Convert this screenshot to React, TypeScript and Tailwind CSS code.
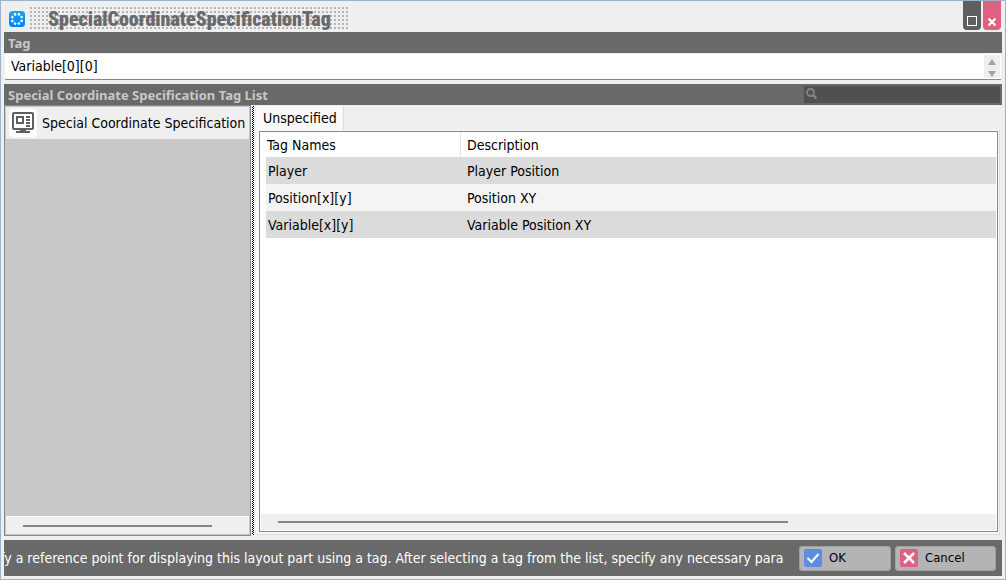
import type { ReactNode } from "react";

const rows = [
  { name: "Player", description: "Player Position" },
  { name: "Position[x][y]", description: "Position XY" },
  { name: "Variable[x][y]", description: "Variable Position XY" },
];

const dots = [0, 1, 2, 3, 4, 5, 6, 7];

function AppIcon() {
  return (
    <svg className="size-4 shrink-0" viewBox="0 0 16 16" aria-hidden="true">
      <defs>
        <linearGradient id="app-fill" x1="0" y1="0" x2="0" y2="1">
          <stop offset="0" stopColor="#1ba4ff" />
          <stop offset="1" stopColor="#0080ff" />
        </linearGradient>
      </defs>
      <rect width="16" height="16" rx="3.5" fill="url(#app-fill)" />
      {dots.map((n) => (
        <circle
          key={n}
          cx={8 + 5 * Math.cos((n * Math.PI) / 4 + 0.39)}
          cy={8 + 5 * Math.sin((n * Math.PI) / 4 + 0.39)}
          r="1.3"
          fill="#fff"
        />
      ))}
    </svg>
  );
}

function MonitorIcon() {
  return (
    <svg className="size-7 shrink-0 rounded bg-white" viewBox="0 0 28 28" aria-hidden="true">
      <rect x="4" y="4" width="20" height="16" rx="1" fill="none" stroke="#5f5f5f" strokeWidth="2" />
      <rect x="8" y="8" width="6" height="6" fill="none" stroke="#5f5f5f" strokeWidth="2" />
      <path d="M17 8h4M17 11h4M17 14h4M17 17h4" stroke="#5f5f5f" strokeWidth="2" />
      <path d="M11 21h6v1h4v2H7v-2h4z" fill="#5f5f5f" />
    </svg>
  );
}

function FooterButton({ label, wide, children }: { label: string; wide?: boolean; children: ReactNode }) {
  return (
    <button
      type="button"
      className={`flex h-[25px] items-center gap-[7px] rounded bg-[#b4b4b4] pl-[5px] font-['DejaVu_Sans_Condensed','DejaVu_Sans',sans-serif] text-[13px] text-black ring-1 ring-[#a0a0a0] ring-inset ${wide ? "w-[101px]" : "w-[92px]"}`}
    >
      {children}
      {label}
    </button>
  );
}

export default function App() {
  return (
    <div className="flex h-screen min-h-80 flex-col border border-[#99b4d1] bg-[#efefef] px-[3px] pb-[3px] font-['DejaVu_Sans_Condensed','DejaVu_Sans',sans-serif] text-[14px] leading-5 text-black">
      <header className="flex h-[31px] shrink-0 items-start justify-between">
        <div className="flex items-center gap-[5px] pt-1.5 pl-[5px]">
          <AppIcon />
          <div className="flex h-[23px] w-[320px] items-center bg-[conic-gradient(from_270deg_at_2px_2px,#b4b4b4_90deg,transparent_0)] bg-size-[4px_4px] pl-[18px]">
            <h1 className="font-['Liberation_Sans_Narrow','Roboto_Condensed','Roboto',sans-serif] text-[20px] leading-5 font-black text-[#6a6a6a]">
              SpecialCoordinateSpecificationTag
            </h1>
          </div>
        </div>
        <div className="flex gap-0.5 pr-px">
          <button type="button" aria-label="Maximize" className="flex h-[29px] w-[18px] items-end justify-center rounded-b bg-[#5f5f5f] pb-1">
            <span className="size-2.5 border border-white" />
          </button>
          <button type="button" aria-label="Close" className="flex h-[29px] w-[18px] items-end justify-center rounded-b bg-[#e06083] pb-1">
            <svg className="size-2" viewBox="0 0 8 8" aria-hidden="true">
              <path d="M0.500 0.500l7 7M7.500 0.500l-7 7" stroke="#fff" strokeWidth="2.200" />
            </svg>
          </button>
        </div>
      </header>

      <label htmlFor="tag" className="h-[21px] shrink-0 bg-[#696969] pl-1 font-['Noto_Sans',sans-serif] text-[13px] leading-[22px] font-bold text-[#c8c8c8]">
        Tag
      </label>
      <div className="mt-px mr-px ml-px flex h-[26px] shrink-0 border-b border-[#868686] bg-white">
        <input id="tag" defaultValue="Variable[0][0]" className="h-6 min-w-0 flex-1 pl-1.5 outline-none" />
        <div className="mt-px mr-px mb-px flex w-4 flex-col justify-between bg-[#efefef] pt-1 pb-px">
          <button type="button" aria-label="Scroll up" className="mx-auto block h-1.5 w-2 bg-[#a0a0a0] [clip-path:polygon(50%_0,100%_100%,0_100%)]" />
          <button type="button" aria-label="Scroll down" className="mx-auto block h-1.5 w-2 bg-[#a0a0a0] [clip-path:polygon(0_0,100%_0,50%_100%)]" />
        </div>
      </div>

      <div className="mt-1 flex h-[21px] shrink-0 items-center justify-between bg-[#696969] pr-0.5 pl-1">
        <h2 className="font-['Noto_Sans',sans-serif] text-[13px] leading-5 font-bold text-[#c8c8c8]">Special Coordinate Specification Tag List</h2>
        <label className="flex h-[17px] w-[196px] items-start bg-[#505050] pt-0.5 pl-0.5">
          <svg className="size-[11px] shrink-0" viewBox="0 0 11 11" aria-hidden="true">
            <circle cx="4.500" cy="4.500" r="3.500" fill="none" stroke="#828282" strokeWidth="2" />
            <path d="M7 7l3.500 3.500" stroke="#828282" strokeWidth="2.500" />
          </svg>
          <input type="search" aria-label="Search tags" className="h-3 min-w-0 flex-1 text-white outline-none" />
        </label>
      </div>

      <main className="flex min-h-0 flex-1">
        <aside className="flex w-[247px] shrink-0 flex-col border border-[#868690] bg-[#c8c8c8] p-px">
          <button type="button" className="flex h-8 items-center gap-[5px] bg-[#efefef] pl-[3px] text-left whitespace-nowrap">
            <MonitorIcon />
            <span>Special Coordinate Specification</span>
          </button>
          <div className="mt-auto flex h-[18px] items-center border-t border-white bg-[#efefef] pr-[37px] pl-[17px]">
            <div className="h-0.5 flex-1 bg-[#868686]" />
          </div>
        </aside>
        <div className="my-px mr-0.5 ml-px w-0.5 bg-[repeating-conic-gradient(#000_0_25%,#efefef_0_50%)] bg-size-[2px_2px]" />
        <section className="flex min-w-0 flex-1 flex-col py-px pr-0.5">
          <div role="tablist" className="flex h-6 shrink-0">
            <button type="button" role="tab" aria-selected="true" className="border-r border-[#dcdcdc] bg-[#f9f9f9] pr-1.5 pl-[7px]">
              Unspecified
            </button>
          </div>
          <div className="flex min-h-0 flex-1 flex-col border-r border-b border-[#dcdcdc] bg-[#f9f9f9] pt-px pr-px pb-0.5 pl-[3px]">
            <div className="flex flex-1 flex-col border border-[#868690] bg-white p-px pt-0">
              <table className="w-full table-fixed border-separate border-spacing-0 text-left">
                <colgroup>
                  <col className="w-[5px]" />
                  <col className="w-[195px]" />
                  <col />
                </colgroup>
                <thead>
                  <tr className="h-[25px]">
                    <td className="p-0" />
                    <th className="border-r border-[#e5e5e5] p-0 pl-px font-normal">Tag Names</th>
                    <th className="p-0 pl-1.5 font-normal">Description</th>
                  </tr>
                </thead>
                <tbody>
                  {rows.map((row, i) => (
                    <tr key={row.name} className="h-[27px]">
                      <td className="p-0" />
                      <td className={`p-0 pl-0.5 ${i % 2 ? "bg-[#f4f4f4]" : "bg-[#dbdbdb]"}`}>{row.name}</td>
                      <td className={`p-0 pl-1.5 ${i % 2 ? "bg-[#f4f4f4]" : "bg-[#dbdbdb]"}`}>{row.description}</td>
                    </tr>
                  ))}
                </tbody>
              </table>
              <div className="mt-auto flex h-4 items-center bg-[#efefef] pl-[17px]">
                <div className="h-0.5 w-[71%] bg-[#868686]" />
              </div>
            </div>
          </div>
        </section>
      </main>

      <footer className="mt-1 flex h-9 shrink-0 items-center gap-1 bg-[#696969] pr-1.5">
        <div className="mr-0.5 min-w-0 flex-1 overflow-hidden">
          <p className="-ml-1 whitespace-nowrap text-white">
            fy a reference point for displaying this layout part using a tag. After selecting a tag from the list, specify any necessary para
          </p>
        </div>
        <FooterButton label="OK">
          <svg className="size-[18px] rounded-xs bg-[#5f8ce0]" viewBox="0 0 18 18" aria-hidden="true">
            <path d="M3.500 9l4 4 7-8" fill="none" stroke="#fff" strokeWidth="2" />
          </svg>
        </FooterButton>
        <FooterButton label="Cancel" wide>
          <svg className="size-[18px] rounded-xs bg-[#e06083]" viewBox="0 0 18 18" aria-hidden="true">
            <path d="M4 4l10 10M14 4L4 14" stroke="#fff" strokeWidth="2.500" />
          </svg>
        </FooterButton>
      </footer>
    </div>
  );
}
